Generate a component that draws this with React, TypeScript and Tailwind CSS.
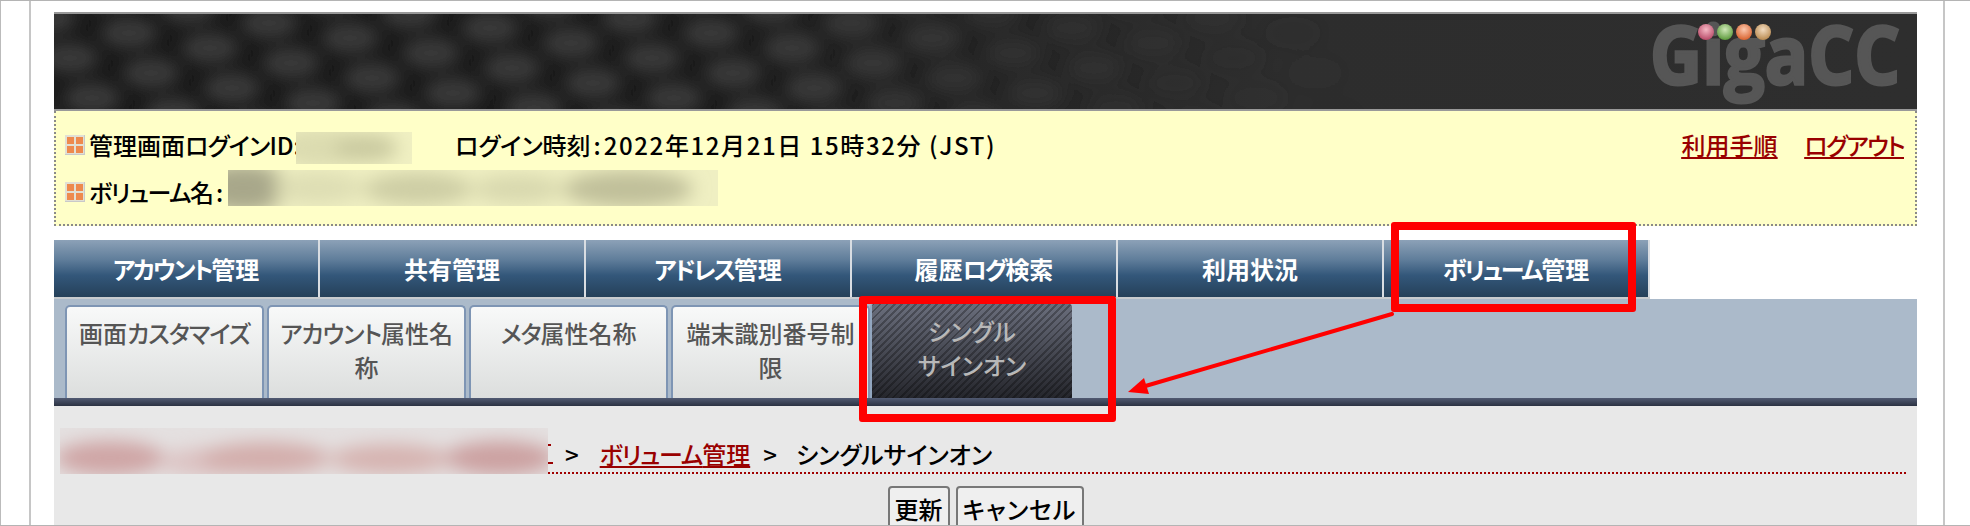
const navItems = ['アカウント管理', '共有管理', 'アドレス管理', '履歴ログ検索', '利用状況', 'ボリューム管理'];

const subTabs = [
  ['画面カスタマイズ'],
  ['アカウント属性名', '称'],
  ['メタ属性名称'],
  ['端末識別番号制', '限'],
];

// dots of the header texture, laid on a skewed lattice and fading out to the right
const blobs: { x: number; y: number; o: number }[] = [];
for (let i = -3; i < 18; i++) {
  for (let j = -6; j < 8; j++) {
    const x = 129 + i * 81 + j * 22;
    const y = 33 + i * 15 + j * 40;
    if (y < -10 || y > 130 || x < 30 || x > 1500) continue;
    const o = x < 800 ? 1 : Math.max(0, 1 - (x - 800) / 550);
    blobs.push({ x, y, o });
  }
}

function HeaderArt() {
  return (
    <svg className="absolute inset-0 h-full w-full" viewBox="54 14 1863 95" preserveAspectRatio="none">
      <defs>
        <linearGradient id="hd" x1="0" x2="1" y1="0" y2="0">
          <stop offset="0" stopColor="#191919" />
          <stop offset="0.36" stopColor="#1b1b1b" />
          <stop offset="0.66" stopColor="#2d2d2d" />
          <stop offset="1" stopColor="#2e2e2e" />
        </linearGradient>
        <filter id="soft" x="-50%" y="-50%" width="200%" height="200%">
          <feGaussianBlur stdDeviation="8" />
        </filter>
        <radialGradient id="pink" cx="0.5" cy="0.35" r="0.65">
          <stop offset="0" stopColor="#f5b8c4" />
          <stop offset="1" stopColor="#b84a68" />
        </radialGradient>
        <radialGradient id="green" cx="0.5" cy="0.35" r="0.65">
          <stop offset="0" stopColor="#cfe8b8" />
          <stop offset="1" stopColor="#5c9a3c" />
        </radialGradient>
        <radialGradient id="orange" cx="0.5" cy="0.35" r="0.65">
          <stop offset="0" stopColor="#fbc8ae" />
          <stop offset="1" stopColor="#d9622e" />
        </radialGradient>
        <radialGradient id="tan" cx="0.5" cy="0.35" r="0.65">
          <stop offset="0" stopColor="#f3dcc0" />
          <stop offset="1" stopColor="#b98a50" />
        </radialGradient>
      </defs>
      <rect x="54" y="14" width="1863" height="95" fill="url(#hd)" />
      <g filter="url(#soft)">
        {blobs.map((b, i) => (
          <ellipse key={i} cx={b.x} cy={b.y} rx="29" ry="16" fill="#383838" opacity={b.o} />
        ))}
      </g>
      <text
        x="1650"
        y="84"
        textLength="250"
        lengthAdjust="spacingAndGlyphs"
        fontFamily="'Open Sans', sans-serif"
        fontWeight="700"
        fontSize="80"
        fill="#565656"
        stroke="#565656"
        strokeWidth="3"
      >
        GigaCC
      </text>
      <circle cx="1706" cy="32" r="8" fill="url(#pink)" />
      <circle cx="1725" cy="32" r="8" fill="url(#green)" />
      <circle cx="1744" cy="32" r="8" fill="url(#orange)" />
      <circle cx="1763" cy="32" r="8" fill="url(#tan)" />
    </svg>
  );
}

function TileIcon() {
  return (
    <span className="grid h-5 w-5 shrink-0 grid-cols-2 gap-[2px] bg-[#e2e0d4] p-[2px] shadow-[inset_-1px_-1px_0_#c9c9c9]">
      <span className="bg-[#ee8a4e]" />
      <span className="bg-[#ee8a4e]" />
      <span className="bg-[#ee8a4e]" />
      <span className="bg-[#ee8a4e]" />
    </span>
  );
}

// the reference font sets katakana tighter than kanji
function Kana({ text, className }: { text: string; className: string }) {
  return (
    <>
      {text.split(/([ァ-ヶー]+)/).map((part, i) =>
        i % 2 === 1 ? (
          <span key={i} className={className}>
            {part}
          </span>
        ) : (
          part
        ),
      )}
    </>
  );
}

type Smudge = { cx: number; cy: number; rx: number; ry: number; fill: string };

// blurred-out parts of the screenshot
function Blur({ id, className, w, h, base, spots }: { id: string; className: string; w: number; h: number; base: string; spots: Smudge[] }) {
  return (
    <svg className={className} width={w} height={h} viewBox={`0 0 ${w} ${h}`}>
      <defs>
        <filter id={id} x="-30%" y="-80%" width="160%" height="260%">
          <feGaussianBlur stdDeviation="9" />
        </filter>
      </defs>
      <rect width={w} height={h} fill={base} />
      <g filter={`url(#${id})`}>
        {spots.map((s, i) => (
          <ellipse key={i} {...s} />
        ))}
      </g>
    </svg>
  );
}

export default function App() {
  return (
    <div className="relative h-[526px] w-[1970px] overflow-hidden border-y border-[#b4b4b4] bg-white font-['Noto_Sans_CJK_JP',sans-serif] text-[24px] font-medium [font-feature-settings:'palt']">
      <div className="flex h-full overflow-hidden">
        <div className="w-[29px] shrink-0 border-l border-[#bbbbbb]" />
        <main className="flex w-[1916px] shrink-0 flex-col border-x-2 border-[#c6c6c6] pt-[11px] pr-[26px] pl-[23px]">
          <div className="relative h-[99px] shrink-0 border-y-2 border-[#999999]">
            <HeaderArt />
          </div>

          <section className="relative h-[115px] shrink-0 border-x-2 border-b-2 border-dotted border-[#8a8a8a] bg-[#ffffc8] pt-[10px] pr-[11px] pl-[9px] leading-none text-black">
            <div className="flex h-[47px] items-center">
              <TileIcon />
              <span className="ml-[4px] w-[366px]">
                <Kana text="管理画面ログインID" className="tracking-[-0.8px]" />
                <span>:</span>
              </span>
              <span>ログイン時刻</span>
              <span className="mx-[3px]">:</span>
              <span className="tracking-[1.6px]">2022年12月21日 15時32分 (JST)</span>
              <span className="ml-auto flex gap-[27px] text-[#990000] underline">
                <a>利用手順</a>
                <a className="tracking-[-1.6px]">ログアウト</a>
              </span>
            </div>
            <div className="flex h-[47px] items-center">
              <TileIcon />
              <span className="ml-[4px]">
                <Kana text="ボリューム名" className="tracking-[-1.5px]" />
                <span className="ml-[2px]">:</span>
              </span>
            </div>
            <Blur
              id="b1"
              className="absolute top-[21px] left-[240px]"
              w={116}
              h={32}
              base="#f0f0c2"
              spots={[
                { cx: 25, cy: 16, rx: 45, ry: 20, fill: '#dcdcb0' },
                { cx: 70, cy: 16, rx: 32, ry: 14, fill: '#cacaa0' },
              ]}
            />
            <Blur
              id="b2"
              className="absolute top-[59px] left-[172px]"
              w={490}
              h={36}
              base="#efefc2"
              spots={[
                { cx: 15, cy: 18, rx: 45, ry: 24, fill: '#a8a78a' },
                { cx: 90, cy: 18, rx: 45, ry: 16, fill: '#dedeb4' },
                { cx: 190, cy: 19, rx: 55, ry: 16, fill: '#cdcda4' },
                { cx: 290, cy: 19, rx: 45, ry: 14, fill: '#d8d8ae' },
                { cx: 400, cy: 19, rx: 65, ry: 18, fill: '#c0bf9a' },
              ]}
            />
          </section>

          <nav className="mt-[14px] flex h-[59px] w-[1596px] shrink-0 border-b-2 border-[#c8cbce]">
            {navItems.map((item) => (
              <div
                key={item}
                className="flex flex-1 items-center justify-center border-r-2 border-[#d9dde2] bg-[linear-gradient(#8ca1b7,#5f7d9a_35%,#33577a_62%,#254059)] font-bold text-white"
              >
                <span>
                  <Kana text={item} className="tracking-[-2.2px]" />
                </span>
              </div>
            ))}
          </nav>

          <div className="flex h-[99px] shrink-0 items-end gap-[3px] bg-[#abbaca] pl-[11px] leading-[34px]">
            {subTabs.map((lines) => (
              <div
                key={lines[0]}
                className="h-[93px] w-[199px] shrink-0 rounded-t-[5px] border-x-2 border-t-2 border-[#7e95b4] bg-[linear-gradient(#f8f9f9,#dcdedd)] pt-[9px] text-center text-[#555555]"
              >
                {lines.map((line) => (
                  <div key={line}>
                    <Kana text={line} className="tracking-[-1px]" />
                  </div>
                ))}
              </div>
            ))}
            <div className="-ml-[3px] h-[94px] w-[202px] shrink-0 rounded-t-[3px] border-l-2 border-[#92a6bf] bg-[repeating-linear-gradient(135deg,rgba(0,0,0,.28)_0_2px,transparent_2px_5px),linear-gradient(#6a6e7c,#25262c)] pt-[10px] text-center text-[#b8b8b8]">
              <div>シングル</div>
              <div>サインオン</div>
            </div>
          </div>
          <div className="h-[8px] shrink-0 bg-[linear-gradient(#515a72,#2b3242)]" />

          <div className="flex-1 overflow-hidden bg-[#e8e8e8]">
            <div className="relative mt-[22px] mr-[11px] ml-[6px] flex h-[46px] items-center border-b-2 border-dotted border-[#a00000] pt-[8px] leading-none">
              <span className="ml-[488px] flex h-[20px] w-[5px] flex-col justify-between border-b-2 border-[#990000] pb-[1px]">
                <span className="h-[2px] w-[3px] bg-[#990000]" />
              </span>
              <span className="ml-[12px]">&gt;</span>
              <a className="ml-[21px] text-[#990000] underline">
                <Kana text="ボリューム管理" className="tracking-[-1.2px]" />
              </a>
              <span className="ml-[13px]">&gt;</span>
              <span className="ml-[19px]">シングルサインオン</span>
              <Blur
                id="b3"
                className="absolute top-0 left-0"
                w={488}
                h={46}
                base="#e4e0e0"
                spots={[
                  { cx: 50, cy: 30, rx: 55, ry: 17, fill: '#cfa5a5' },
                  { cx: 150, cy: 34, rx: 50, ry: 14, fill: '#dcc2c2' },
                  { cx: 205, cy: 30, rx: 65, ry: 16, fill: '#d3adab' },
                  { cx: 330, cy: 31, rx: 60, ry: 15, fill: '#d6b3b0' },
                  { cx: 440, cy: 30, rx: 55, ry: 17, fill: '#cca1a1' },
                ]}
              />
            </div>
            <div className="mt-[12px] flex justify-center gap-[6px] leading-[40px] text-black">
              <button className="h-[46px] w-[62px] rounded-[4px] border-2 border-[#777777] bg-[#efefef]">更新</button>
              <button className="h-[46px] w-[128px] rounded-[4px] border-2 border-[#777777] bg-[#efefef] tracking-[1px]">キャンセル</button>
            </div>
          </div>
        </main>
      </div>

      {/* red callouts drawn over the screenshot */}
      <div className="absolute top-[295px] left-[859px] h-[126px] w-[257px] rounded-[3px] border-8 border-[#ff0000]" />
      <div className="absolute top-[221px] left-[1391px] h-[90px] w-[245px] rounded-[3px] border-8 border-[#ff0000]" />
      <svg className="absolute top-0 left-0" width="1970" height="526">
        <line x1="1392" y1="313" x2="1142" y2="386" stroke="#ff0000" strokeWidth="4" strokeLinecap="round" />
        <polygon points="1128,391 1144,377 1149,393" fill="#ff0000" />
      </svg>
    </div>
  );
}
